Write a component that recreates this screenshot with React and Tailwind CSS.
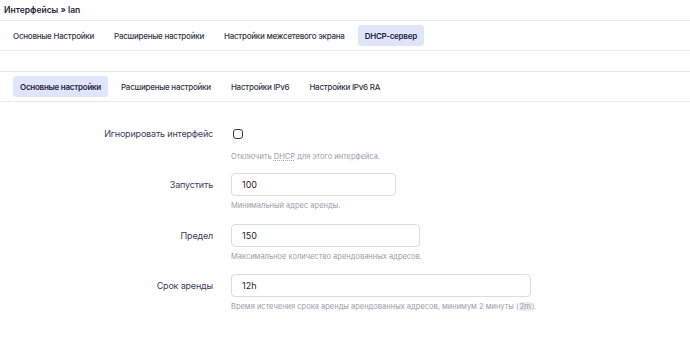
import React from 'react';

const font = { fontFamily: 'Inter, "Noto Sans", sans-serif' };

const TopTabs = ['Основные Настройки', 'Расширеные настройки', 'Настройки межсетевого экрана', 'DHCP-сервер'];
const SubTabs = ['Основные настройки', 'Расширеные настройки', 'Настройки IPv6', 'Настройки IPv6 RA'];

const Tab = ({ label, active }) => (
  <div
    className={`px-[7px] h-[21px] flex items-center rounded-[4px] text-[8px] tracking-[-0.25px] font-medium ${
      active ? 'bg-[#dfe5fb] text-[#1f2340] font-semibold' : 'text-[#333846]'
    }`}
  >
    {label}
  </div>
);

const Row = ({ label, children, hint, className = '', hintGap = 'mt-[4px]' }) => (
  <div className={`flex ${className}`}>
    <div className="w-[213px] shrink-0 text-right text-[9px] tracking-[-0.18px] leading-[23px] text-[#3d3b5e]">
      {label}
    </div>
    <div className="ml-[18px] flex flex-col">
      {children}
      <div className={`text-[7.5px] leading-[11px] text-[#9d9da6] ${hintGap}`}>{hint}</div>
    </div>
  </div>
);

const Input = ({ value, width }) => (
  <div
    className="h-[23px] flex items-center px-[10px] border border-[#dcdce2] rounded-[4px] text-[9px] text-[#1f2230]"
    style={{ width }}
  >
    {value}
  </div>
);

export default function App() {
  return (
    <div className="w-[690px] h-[338px] bg-white overflow-hidden" style={font}>
      <div className="h-[20px] px-[4px] flex items-center text-[8.5px] text-[#25283a] font-semibold">
        Интерфейсы » lan
      </div>
      <div className="border-t border-b border-[#e8e9f0] h-[31px] flex items-center gap-[6px] px-[6px]">
        {TopTabs.map((t, i) => (
          <Tab key={t} label={t} active={i === 3} />
        ))}
      </div>
      <div className="h-[20px]" />
      <div className="border-t border-b border-[#e8e9f0] h-[31px] flex items-center gap-[6px] px-[13px]">
        {SubTabs.map((t, i) => (
          <Tab key={t} label={t} active={i === 0} />
        ))}
      </div>
      <div className="flex flex-col pt-[20px]">
        <Row
          label="Игнорировать интерфейс"
          hintGap="mt-[6px]"
          hint={
            <span>
              Отключить <span className="underline decoration-dotted">DHCP</span> для этого интерфейса.
            </span>
          }
        >
          <div className="h-[23px] flex items-center">
            <div className="w-[10px] h-[10px] border border-[#3a3a48] rounded-[3px] ml-[2px]" />
          </div>
        </Row>
        <Row label="Запустить" className="mt-[11px]" hint="Минимальный адрес аренды.">
          <Input value="100" width={165} />
        </Row>
        <Row label="Предел" className="mt-[13px]" hint="Максимальное количество арендованных адресов.">
          <Input value="150" width={189} />
        </Row>
        <Row
          label="Срок аренды"
          className="mt-[12px]"
          hint={
            <span>
              Время истечения срока аренды арендованных адресов, минимум 2 минуты (
              <span className="bg-[#ececef] px-[1px] rounded-[2px]">2m</span>).
            </span>
          }
        >
          <Input value="12h" width={300} />
        </Row>
      </div>
    </div>
  );
}
